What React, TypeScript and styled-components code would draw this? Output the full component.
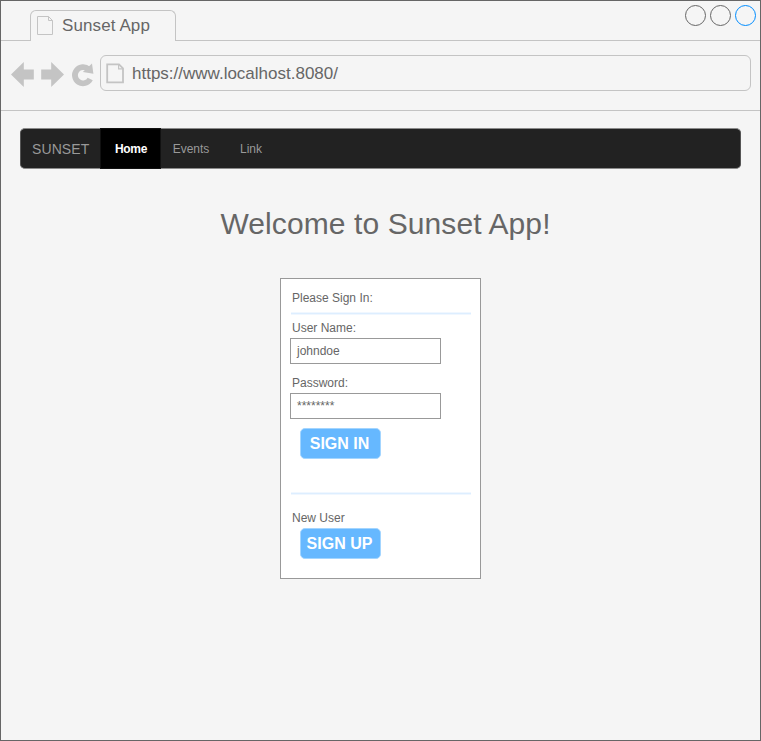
import React from "react";
import styled, { createGlobalStyle } from "styled-components";

const Global = createGlobalStyle`
  * { box-sizing: border-box; }
  body { margin: 0; background: #f5f5f5; font-family: "Liberation Sans", Arial, sans-serif; color: #666; }
`;

const Frame = styled.div`
  width: 761px;
  height: 741px;
  border: 1px solid #666;
  background: #f5f5f5;
  display: flex;
  flex-direction: column;
`;

const TabStrip = styled.div`
  display: flex;
  height: 40px;
`;

const StripEdge = styled.div`
  width: 29px;
  border-bottom: 1px solid #c4c4c4;
`;

const Tab = styled.div`
  width: 146px;
  height: 31px;
  margin-top: 9px;
  padding: 0 0 1px 6px;
  border: 1px solid #c4c4c4;
  border-bottom: 0;
  border-radius: 6px 6px 0 0;
  display: flex;
  align-items: center;
  gap: 8px;
  font-size: 17px;
  letter-spacing: 0.1px;
  white-space: nowrap;
`;

const WindowControls = styled.div`
  flex: 1;
  display: flex;
  justify-content: flex-end;
  align-items: flex-start;
  gap: 4px;
  padding: 4px 4px 0 0;
  border-bottom: 1px solid #c4c4c4;
`;

const Control = styled.div<{ $color: string }>`
  width: 21px;
  height: 21px;
  border: 1px solid ${(p) => p.$color};
  border-radius: 50%;
`;

const Toolbar = styled.div`
  display: flex;
  height: 70px;
  padding: 14px 9px 0 10px;
  border-bottom: 1px solid #c4c4c4;
`;

const Address = styled.div`
  flex: 1;
  height: 36px;
  margin-left: 5px;
  padding-left: 5px;
  border: 1px solid #c4c4c4;
  border-radius: 6px;
  display: flex;
  align-items: center;
  gap: 7px;
  font-size: 17px;
`;

const AddressText = styled.span`
  padding-top: 2px;
`;

const Page = styled.main`
  flex: 1;
  display: flex;
  flex-direction: column;
  align-items: center;
  padding: 17px 19px 0;
`;

const NavBar = styled.nav`
  align-self: stretch;
  display: flex;
  height: 41px;
  border: 1px solid #8b8b8b;
  border-left-color: #555;
  border-right-color: #555;
  border-radius: 5px;
  background: #222;
  color: #999;
  font-size: 12px;
  line-height: 41px;
`;

const Brand = styled.div`
  width: 79px;
  padding-left: 11px;
  font-size: 14px;
  letter-spacing: 0.1px;
`;

const NavItem = styled.div<{ $active?: boolean; $width: number }>`
  width: ${(p) => p.$width}px;
  height: 41px;
  margin-top: -1px;
  line-height: 43px;
  text-align: center;
  ${(p) => p.$active && "background: #000; color: #fff; font-weight: 700; border: 1px solid #111; line-height: 41px; letter-spacing: -0.3px; padding-left: 1px;"}
`;

const Title = styled.h1`
  margin: 37px 0 0 10px;
  font-size: 30px;
  line-height: 36px;
  font-weight: 400;
  letter-spacing: 0.1px;
  white-space: nowrap;
`;

const Card = styled.section`
  width: 201px;
  height: 301px;
  margin-top: 36px;
  padding: 11px 9px 0;
  border: 1px solid #999;
  background: #fff;
  font-size: 12px;
  line-height: 16px;
`;

const Label = styled.div<{ $top?: number }>`
  margin-top: ${(p) => p.$top ?? 0}px;
  padding-left: 2px;
  height: 16px;
`;

const Rule = styled.div<{ $top: number }>`
  width: 180px;
  height: 3px;
  margin-top: ${(p) => p.$top}px;
  margin-left: 1px;
  border: solid #f0f7ff;
  border-width: 1px 0;
  background: #ddeeff;
`;

const Field = styled.div`
  width: 151px;
  height: 26px;
  margin-top: 2px;
  padding-left: 6px;
  border: 1px solid #999;
  line-height: 24px;
`;

const Button = styled.div<{ $top: number }>`
  width: 81px;
  height: 31px;
  margin: ${(p) => p.$top}px 0 0 10px;
  padding-right: 2px;
  border: 1px solid #a3d5ff;
  border-radius: 5px;
  background: #66b8ff;
  color: #fff;
  font-size: 16px;
  font-weight: 700;
  line-height: 29px;
  text-align: center;
  white-space: nowrap;
`;

const TabPageIcon = () => (
  <svg width="17" height="20" viewBox="0 0 17 20" fill="none" stroke="#c4c4c4">
    <path d="M.5 .5h11l4 4v14H.5zM11.5 .5v4h4" />
  </svg>
);

const AddressPageIcon = () => (
  <svg width="19" height="21" viewBox="0 0 19 21" fill="none" stroke="#c4c4c4" strokeWidth="1.8">
    <path d="M1.2 1.4h11.8l4 4v14H1.2z" />
    <path d="M12.6 1.4v4.4H17" strokeWidth="1.2" />
  </svg>
);

const NavigationIcons = () => (
  <svg width="84" height="36" viewBox="0 0 84 36" fill="#c4c4c4">
    <path d="M0 19.5 12.8 7v7.5h10v10h-10V32zM53 19.5 40.2 7v7.5h-10v10h10V32z" />
    <path d="M79.2 24A8.1 8.1 0 1 1 77.6 14.3" fill="none" stroke="#c4c4c4" strokeWidth="5.8" />
    <path d="M81 8.6 82.4 18.8 71.8 17z" />
  </svg>
);

export default function App() {
  return (
    <>
      <Global />
      <Frame>
        <TabStrip>
          <StripEdge />
          <Tab><TabPageIcon />Sunset App</Tab>
          <WindowControls>
            <Control $color="#666" />
            <Control $color="#666" />
            <Control $color="#008cff" />
          </WindowControls>
        </TabStrip>
        <Toolbar>
          <NavigationIcons />
          <Address><AddressPageIcon /><AddressText>https://www.localhost.8080/</AddressText></Address>
        </Toolbar>
        <Page>
          <NavBar>
            <Brand>SUNSET</Brand>
            <NavItem $active $width={61}>Home</NavItem>
            <NavItem $width={60}>Events</NavItem>
            <NavItem $width={60}>Link</NavItem>
          </NavBar>
          <Title>Welcome to Sunset App!</Title>
          <Card>
            <Label>Please Sign In:</Label>
            <Rule $top={6} />
            <Label $top={5}>User Name:</Label>
            <Field>johndoe</Field>
            <Label $top={11}>Password:</Label>
            <Field>********</Field>
            <Button $top={9}>SIGN IN</Button>
            <Rule $top={33} />
            <Label $top={15}>New User</Label>
            <Button $top={2}>SIGN UP</Button>
          </Card>
        </Page>
      </Frame>
    </>
  );
}
